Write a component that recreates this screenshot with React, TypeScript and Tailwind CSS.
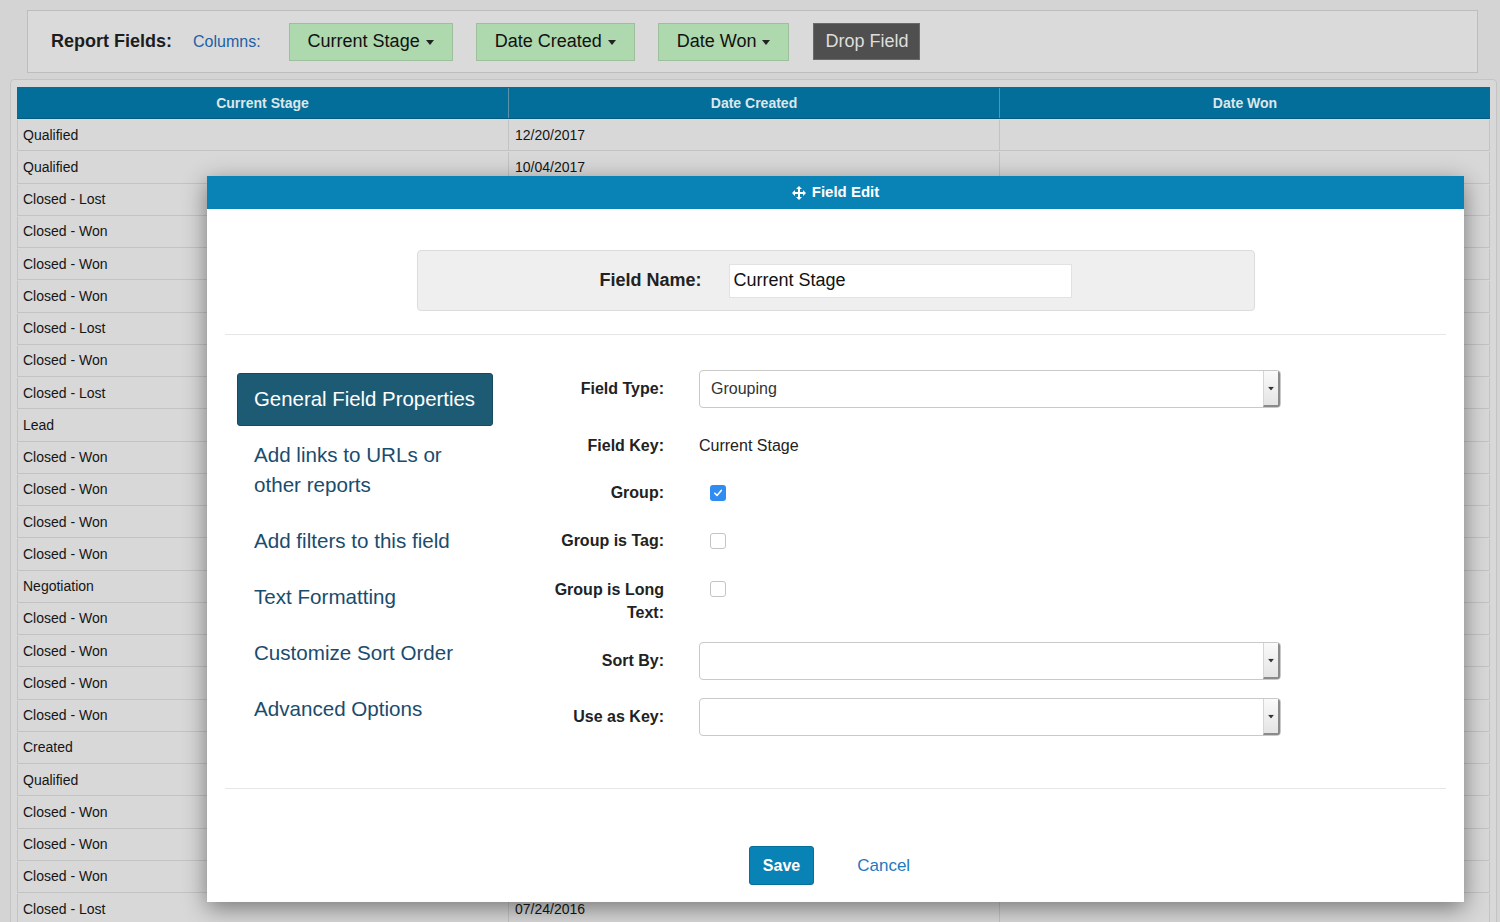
import React from "react";

const stages = [
  "Qualified", "Qualified", "Closed - Lost", "Closed - Won", "Closed - Won", "Closed - Won",
  "Closed - Lost", "Closed - Won", "Closed - Lost", "Lead", "Closed - Won", "Closed - Won",
  "Closed - Won", "Closed - Won", "Negotiation", "Closed - Won", "Closed - Won", "Closed - Won",
  "Closed - Won", "Created", "Qualified", "Closed - Won", "Closed - Won", "Closed - Won", "Closed - Lost",
];

const dates: Record<number, string> = { 0: "12/20/2017", 1: "10/04/2017", 24: "07/24/2016" };

const Caret = ({ className = "" }: { className?: string }) => (
  <svg width="8" height="5" viewBox="0 0 8 5" className={className}>
    <path d="M0 0h8L4 5z" fill="currentColor" />
  </svg>
);

const ColumnButton = ({ label }: { label: string }) => (
  <div className="h-[38px] px-[18px] flex items-center gap-[6px] bg-[#aed8ad] border border-[#9dbf9c] text-[18px] text-[#111]">
    {label}
    <Caret className="text-[#222] mt-[1px]" />
  </div>
);

const SelectBox = ({ value = "" }: { value?: string }) => (
  <div className="w-[582px] h-[38px] flex bg-white border border-[#c9c9c9] rounded-[4px] overflow-hidden">
    <div className="flex-1 flex items-center pl-[11px] text-[16px] text-[#333]">{value}</div>
    <div className="w-[17px] flex items-center justify-center bg-gradient-to-b from-[#fafafa] to-[#e4e4e4] border-l border-[#d6d6d6] border-r-[2px] border-r-[#8a8a8a] border-b-[2px] border-b-[#8a8a8a]">
      <Caret className="text-[#333] scale-75" />
    </div>
  </div>
);

const CheckBox = ({ checked = false }: { checked?: boolean }) =>
  checked ? (
    <div className="w-[16px] h-[16px] rounded-[3px] bg-[#2f8cf2] flex items-center justify-center">
      <svg width="10" height="10" viewBox="0 0 10 10">
        <path d="M1.8 5.2 4 7.4 8.3 2.4" stroke="white" strokeWidth="1.6" fill="none" strokeLinecap="round" strokeLinejoin="round" />
      </svg>
    </div>
  ) : (
    <div className="w-[16px] h-[16px] rounded-[3px] bg-white border border-[#c4c4c4]" />
  );

const MoveIcon = () => (
  <svg width="14" height="14" viewBox="0 0 14 14" fill="white">
    <path d="M7 0 10 3H8v3h3V4l3 3-3 3V8H8v3h2l-3 3-3-3h2V8H3v2L0 7l3-3v2h3V3H4z" />
  </svg>
);

const navLinks = ["Add filters to this field", "Text Formatting", "Customize Sort Order", "Advanced Options"];

export default function App() {
  return (
    <div className="relative w-[1500px] h-[922px] overflow-hidden bg-[#d4d4d4] font-['Liberation_Sans',Arial,sans-serif]">
      {/* report fields bar */}
      <div className="pt-[10px] px-[27px] pr-[22px]">
        <div className="h-[63px] border border-[#bdbdbd] bg-[#dadada] flex items-center pl-[23px]">
          <span className="text-[18px] font-bold text-[#1d1d1d]">Report Fields:</span>
          <span className="ml-[21px] text-[16px] text-[#1f5fa6]">Columns:</span>
          <div className="ml-[28px] flex items-center gap-[23px]">
            <ColumnButton label="Current Stage" />
            <ColumnButton label="Date Created" />
            <ColumnButton label="Date Won" />
            <div className="ml-[1px] h-[37px] px-[11px] flex items-center bg-[#4f4f4f] border border-[#6a6a6a] text-[18px] text-[#dedede]">
              Drop Field
            </div>
          </div>
        </div>
      </div>

      {/* table */}
      <div className="mt-[6px] mx-[10px] mr-[3px] border border-[#c4c4c4] rounded-t-[4px] bg-[#d8d8d8] pt-[7px] px-[6px]">
        <div className="grid grid-cols-3 h-[32px] pt-[1px] bg-[#036e99] border-b border-[#025a7e] text-[14px] font-bold text-[#dfe6ea]">
          <div className="flex items-center justify-center">Current Stage</div>
          <div className="flex items-center justify-center border-l border-[#5b93ab]">Date Created</div>
          <div className="flex items-center justify-center border-l border-[#5b93ab]">Date Won</div>
        </div>
        {stages.map((s, i) => (
          <div key={i} className="grid grid-cols-3 h-[32.25px] pt-[1px] border-b border-[#c3c3c3] text-[14px] text-[#151515]">
            <div className="flex items-center px-[5px] border-l border-[#c3c3c3]">{s}</div>
            <div className="flex items-center px-[6px] border-l border-[#c3c3c3]">{dates[i] ?? ""}</div>
            <div className="flex items-center px-[6px] border-x border-[#c3c3c3]"></div>
          </div>
        ))}
      </div>

      {/* modal */}
      <div className="absolute left-[207px] top-[176px] w-[1257px] h-[726px] bg-white shadow-[0_6px_22px_rgba(0,0,0,0.45)] flex flex-col">
        <div className="h-[33px] bg-[#0982b5] flex items-center justify-center gap-[6px] text-[15px] font-bold text-white">
          <MoveIcon />
          Field Edit
        </div>
        <div className="px-[18px]">
          <div className="mt-[41px] mx-auto w-[838px] h-[61px] bg-[#efefef] border border-[#dcdcdc] rounded-[4px] flex items-center justify-center gap-[27px]">
            <span className="text-[18px] font-bold text-[#222]">Field Name:</span>
            <div className="w-[343px] h-[34px] bg-white border border-[#e2e2e2] flex items-center px-[4px] text-[18px] text-[#111]">
              Current Stage
            </div>
          </div>
          <div className="mt-[23px] border-t border-[#e6e6e6]" />

          <div className="flex pl-[12px] pt-[35px] h-[453px]">
            {/* nav */}
            <div className="w-[256px] flex flex-col">
              <div className="mt-[3px] h-[53px] rounded-[3px] bg-[#1d5b74] border border-[#174a5f] flex items-center px-[16px] text-[20.4px] text-white">
                General Field Properties
              </div>
              <div className="mt-[1px] px-[17px] py-[13px] text-[20.6px] leading-[30px] text-[#1a4c6d]">
                Add links to URLs or other reports
              </div>
              {navLinks.map((l) => (
                <div key={l} className="px-[17px] py-[13px] text-[20.6px] leading-[30px] text-[#1a4c6d]">
                  {l}
                </div>
              ))}
            </div>

            {/* form */}
            <div className="ml-[55px] flex flex-col text-[16px]">
              <div className="flex items-center h-[38px]">
                <div className="w-[116px] text-right font-bold text-[#222]">Field Type:</div>
                <div className="ml-[35px]"><SelectBox value="Grouping" /></div>
              </div>
              <div className="flex items-center h-[24px] mt-[26px]">
                <div className="w-[116px] text-right font-bold text-[#222]">Field Key:</div>
                <div className="ml-[35px] text-[#222]">Current Stage</div>
              </div>
              <div className="flex items-center h-[24px] mt-[23px]">
                <div className="w-[116px] text-right font-bold text-[#222]">Group:</div>
                <div className="ml-[46px]"><CheckBox checked /></div>
              </div>
              <div className="flex items-center h-[24px] mt-[24px]">
                <div className="w-[116px] text-right font-bold text-[#222]">Group is Tag:</div>
                <div className="ml-[46px]"><CheckBox /></div>
              </div>
              <div className="flex items-start mt-[25px]">
                <div className="w-[116px] text-right font-bold text-[#222] leading-[23px]">Group is Long Text:</div>
                <div className="ml-[46px] mt-[3px]"><CheckBox /></div>
              </div>
              <div className="flex items-center h-[38px] mt-[18px]">
                <div className="w-[116px] text-right font-bold text-[#222]">Sort By:</div>
                <div className="ml-[35px]"><SelectBox /></div>
              </div>
              <div className="flex items-center h-[38px] mt-[18px]">
                <div className="w-[116px] text-right font-bold text-[#222]">Use as Key:</div>
                <div className="ml-[35px]"><SelectBox /></div>
              </div>
            </div>
          </div>

          <div className="border-t border-[#e6e6e6]" />
          <div className="mt-[57px] flex justify-center">
            <div className="h-[39px] px-[13px] flex items-center rounded-[3px] bg-[#0982b5] border border-[#076f9b] text-[16px] font-bold text-white">
              Save
            </div>
            <div className="ml-[31px] h-[39px] px-[12px] flex items-center text-[17px] text-[#1f78c1]">Cancel</div>
          </div>
        </div>
      </div>
    </div>
  );
}
